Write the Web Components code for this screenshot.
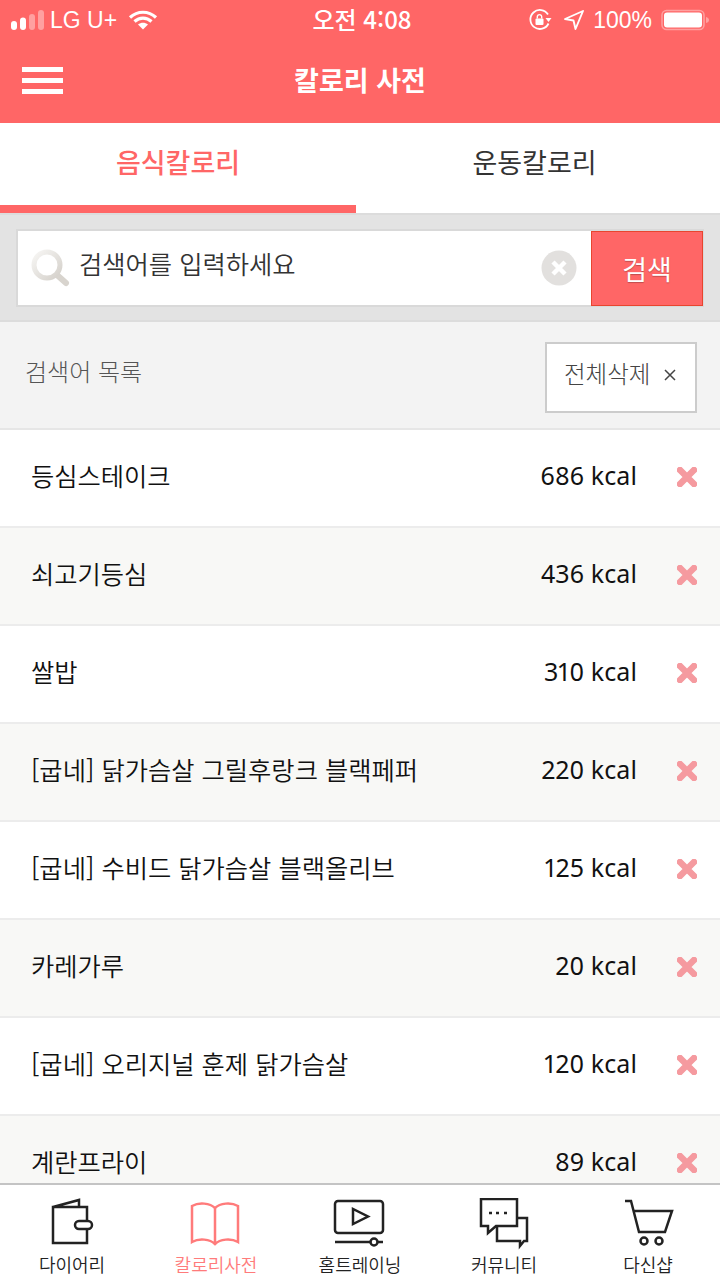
<!DOCTYPE html>
<html lang="ko">
<head>
<meta charset="utf-8">
<title>칼로리 사전</title>
<style>
html,body{margin:0;padding:0;height:1280px;overflow:hidden;background:#fff;}
body{font-family:"Noto Sans CJK KR","Noto Sans",sans-serif;}
calorie-app{height:1280px;}
</style>
</head>
<body>
<calorie-app>
  <status-bar slot="top"></status-bar>
  <app-header slot="top" title="칼로리 사전"></app-header>
  <tab-switch slot="top"></tab-switch>
  <search-box slot="top"></search-box>
  <list-head slot="top"></list-head>
  <food-row name="등심스테이크" kcal="686 kcal"></food-row>
  <food-row name="쇠고기등심" kcal="436 kcal" alt></food-row>
  <food-row name="쌀밥" kcal="310 kcal"></food-row>
  <food-row name="[굽네] 닭가슴살 그릴후랑크 블랙페퍼" kcal="220 kcal" alt></food-row>
  <food-row name="[굽네] 수비드 닭가슴살 블랙올리브" kcal="125 kcal"></food-row>
  <food-row name="카레가루" kcal="20 kcal" alt></food-row>
  <food-row name="[굽네] 오리지널 훈제 닭가슴살" kcal="120 kcal"></food-row>
  <food-row name="계란프라이" kcal="89 kcal" alt></food-row>
  <nav-bar slot="bottom">
    <nav-item icon="diary">다이어리</nav-item>
    <nav-item icon="book" on>칼로리사전</nav-item>
    <nav-item icon="video">홈트레이닝</nav-item>
    <nav-item icon="talk">커뮤니티</nav-item>
    <nav-item icon="cart">다신샵</nav-item>
  </nav-bar>
</calorie-app>
<script>
const sans = `"Noto Sans CJK KR","Noto Sans",sans-serif`

class CalorieApp extends HTMLElement{
  constructor(){
    super();
    this.attachShadow({mode:"open"})
    this.shadowRoot.innerHTML = `
<style>
:host{display:flex;flex-direction:column;width:720px;overflow:hidden;}
.list{flex:1;min-height:0;overflow:hidden;}
</style>
<slot name="top"></slot>
<div class="list"><slot></slot></div>
<slot name="bottom"></slot>`
  }
}

class StatusBar extends HTMLElement{
  constructor(){
    super();
    this.attachShadow({mode:"open"})
    this.shadowRoot.innerHTML = `
<style>
:host{display:grid;grid-template-columns:1fr auto 1fr;align-items:center;height:40px;background:#ff6666;color:#fff;
  font-family:"Liberation Sans",sans-serif;font-size:23px;box-sizing:border-box;}
.l,.r{display:flex;align-items:center;}
.l{padding-left:11px;gap:6px;}
.r{justify-content:flex-end;padding-right:10px;}
.time{font-family:${sans};font-size:24px;font-weight:500;margin:-4px -4px 0 0;}
svg{display:block;}
</style>
<div class="l">
  <svg width="33" height="20" viewBox="0 0 33 20"><rect x="0" y="11" width="6" height="9" rx="3" fill="#fff"/><rect x="9" y="7.500" width="6" height="12.500" rx="3" fill="#fff"/><rect x="18" y="4" width="6" height="16" rx="3" fill="#ffa0a0"/><rect x="27" y="0" width="6" height="20" rx="3" fill="#ffa0a0"/></svg>
  <span>LG U+</span>
  <svg style="margin-left:5px" width="30" height="20" viewBox="0 0 30 20"><path d="M2 7.500C9.500 .5 20.500 .5 28 7.500M6.500 11.500C11.500 7 18.500 7 23.500 11.500" fill="none" stroke="#fff" stroke-width="3.200"/><path d="M10 14.500C13 12 17 12 20 14.500L15 19.500Z" fill="#fff"/></svg>
</div>
<div class="time">오전 4:08</div>
<div class="r">
  <svg width="24" height="24" viewBox="0 0 24 24"><path d="M20.500 15.500A9.500 9.500 0 1 1 20 6.500" fill="none" stroke="#fff" stroke-width="1.800"/><path d="M17.500 10h6l-3 4z" fill="#fff"/><rect x="7.500" y="10.500" width="8" height="6.500" rx="1" fill="#fff"/><path d="M9.300 10.500V8.800a2.200 2.200 0 0 1 4.400 0v1.700" fill="none" stroke="#fff" stroke-width="1.400"/></svg>
  <svg style="margin-left:11px" width="22" height="22" viewBox="0 0 22 22"><path d="M20 2L2 10l8.500 1.500L12.500 20z" fill="none" stroke="#fff" stroke-width="1.900" stroke-linejoin="round"/></svg>
  <span style="margin-left:8px">100%</span>
  <svg style="margin-left:9px" width="49" height="22" viewBox="0 0 49 22"><rect x="1" y="1.500" width="42" height="19" rx="4.500" fill="none" stroke="#ffa0a0" stroke-width="1.500"/><rect x="3" y="3.500" width="38" height="15" rx="3" fill="#fff"/><path d="M45 8c2 .5 3 1.500 3 3s-1 2.500-3 3z" fill="#ffa0a0"/></svg>
</div>`
  }
}

class AppHeader extends HTMLElement{
  constructor(){
    super();
    this.attachShadow({mode:"open"})
    this.shadowRoot.innerHTML = `
<style>
:host{display:flex;align-items:center;height:83px;background:#ff6666;color:#fff;position:relative;justify-content:center;}
.t{font-family:${sans};font-size:27px;font-weight:700;margin-top:-4px;}
.m{position:absolute;left:22px;top:27px;width:41px;height:27px;display:flex;flex-direction:column;justify-content:space-between;}
.m i{display:block;height:5px;background:#fff;}
</style>
<div class="m"><i></i><i></i><i></i></div>
<div class="t"></div>`
    this.shadowRoot.querySelector(".t").textContent = this.getAttribute("title")
  }
}

class TabSwitch extends HTMLElement{
  constructor(){
    super();
    this.attachShadow({mode:"open"})
    this.shadowRoot.innerHTML = `
<style>
:host{display:flex;height:90px;background:#fff;font-family:${sans};font-size:27px;}
div{flex:1;box-sizing:border-box;display:flex;align-items:center;justify-content:center;padding:0 7px 6px 0;color:#333;border-bottom:8px solid transparent;}
.on{flex:0 0 356px;padding-right:0;color:#ff6666;font-weight:500;border-bottom-color:#ff6666;}
</style>
<div class="on">음식칼로리</div><div>운동칼로리</div>`
  }
}

class SearchBox extends HTMLElement{
  constructor(){
    super();
    this.attachShadow({mode:"open"})
    this.shadowRoot.innerHTML = `
<style>
:host{display:block;box-sizing:border-box;height:109px;padding:14px 16px;background:#e3e3e3;border-top:2px solid #dcdcdc;border-bottom:2px solid #dcdcdc;font-family:${sans};}
.box{display:flex;align-items:center;height:78px;box-sizing:border-box;background:#fff;border:2px solid #d9d9d9;}
.ph{flex:1;font-size:25.300px;color:#333;margin-left:8px;margin-top:-10px;font-weight:350;}
.clear{margin-right:14px;}
.btn{width:112px;height:75px;margin-right:-1px;box-sizing:border-box;background:#ff6666;border:1.500px solid #e8452f;color:#fff;font-size:27px;display:flex;align-items:center;justify-content:center;text-shadow:0 1px 1px rgba(0,0,0,.25);}
svg{display:block;}
</style>
<div class="box">
  <svg style="margin-left:13px" width="40" height="40" viewBox="0 0 40 40"><defs><linearGradient id="g" x1="0" y1="0" x2="1" y2="1"><stop offset="0" stop-color="#f7f6f4"/><stop offset="1" stop-color="#d4d0ca"/></linearGradient></defs><path d="M26 27L35 35" stroke="#d8d4ce" stroke-width="6" stroke-linecap="round"/><circle cx="16" cy="17" r="13" fill="#fff" stroke="url(#g)" stroke-width="5"/></svg>
  <div class="ph">검색어를 입력하세요</div>
  <svg class="clear" width="36" height="36" viewBox="0 0 36 36"><circle cx="18" cy="18" r="17.500" fill="#e2e0de"/><path d="M12 12L24 24M24 12L12 24" stroke="#fff" stroke-width="4.500"/></svg>
  <div class="btn">검색</div>
</div>`
  }
}

class ListHead extends HTMLElement{
  constructor(){
    super();
    this.attachShadow({mode:"open"})
    this.shadowRoot.innerHTML = `
<style>
:host{display:flex;align-items:center;justify-content:space-between;box-sizing:border-box;height:108px;padding:5px 23px 0 25px;background:#f3f3f3;border-bottom:2px solid #e6e6e6;font-family:${sans};color:#555;font-size:24px;font-weight:300;}
.l{margin-top:-14px;}
.all{display:flex;align-items:center;box-sizing:border-box;width:152px;height:71px;padding-left:17px;background:#fff;border:2px solid #ccc;color:#444;font-size:23.500px;}
.all span{margin-top:-10px;}
.all svg{margin:-5px 0 0 14px;}
</style>
<div class="l">검색어 목록</div>
<div class="all"><span>전체삭제</span><svg width="12" height="12" viewBox="0 0 12 12"><path d="M1 1L11 11M11 1L1 11" stroke="#444" stroke-width="1.500"/></svg></div>`
  }
}

class FoodRow extends HTMLElement{
  constructor(){
    super();
    this.attachShadow({mode:"open"})
    this.shadowRoot.innerHTML = `
<style>
:host{display:flex;align-items:center;box-sizing:border-box;height:98px;padding:0 23px 2px 31px;background:#fff;border-bottom:2px solid #ececec;font-family:${sans};font-size:25.300px;color:#111;font-weight:350;}
:host([alt]){background:#f8f8f6;}
.n{flex:1;margin-top:-4px;}
.k{font-family:"Noto Sans",sans-serif;font-variant-numeric:proportional-nums;font-size:25px;margin-right:40px;margin-top:-4px;font-weight:400;letter-spacing:.1px;}
svg{display:block;}
</style>
<div class="n"></div><div class="k"></div>
<svg width="20" height="20" viewBox="0 0 20 20"><path d="M3 3L17 17M17 3L3 17" stroke="#f59a9f" stroke-width="6.500" stroke-linecap="round"/></svg>`
    this.shadowRoot.querySelector(".n").textContent = this.getAttribute("name")
    this.shadowRoot.querySelector(".k").textContent = this.getAttribute("kcal")
  }
}

class NavBar extends HTMLElement{
  constructor(){
    super();
    this.attachShadow({mode:"open"})
    this.shadowRoot.innerHTML = `
<style>
:host{display:flex;box-sizing:border-box;height:97px;background:#fff;border-top:2px solid #c4c4c4;}
</style>
<slot></slot>`
  }
}

const navIcons = {
  diary:`<path d="M8 9V45H42V9ZM8 9L34 2V9"/><rect x="30" y="23" width="17" height="8" rx="4" fill="#fff"/>`,
  book:`<path d="M26 10C21 5 10 4 3 8V44C10 40 21 41 26 46C31 41 42 40 49 44V8C42 4 31 5 26 10ZM26 10V46"/>`,
  video:`<rect x="2" y="3" width="48" height="32" rx="3"/><path d="M20 11V26L35 18.500ZM2 44H50"/><circle cx="41" cy="44" r="3.500" fill="#fff"/>`,
  talk:`<path d="M4 1H40V28H19L11 35V28H4Z"/><path d="M40 20H50V43H47L43 48V43H20V28"/><path d="M12 15h3M19 15h3M27 15h3" stroke-width="2.600"/>`,
  cart:`<path d="M4 3H10L18 34H44L51 13H12.500"/><circle cx="23" cy="43" r="3.500"/><circle cx="38" cy="43" r="3.500"/>`
}

class NavItem extends HTMLElement{
  constructor(){
    super();
    this.attachShadow({mode:"open"})
    this.shadowRoot.innerHTML = `
<style>
:host{flex:1;display:flex;flex-direction:column;align-items:center;padding-top:13px;color:#222;font-family:${sans};font-size:18px;font-weight:350;}
:host([on]){color:#ff7b7b;}
svg{display:block;height:52px;width:54px;fill:none;stroke:currentColor;stroke-width:2.500;}
.lb{margin-top:2px;line-height:24px;}
</style>
<svg viewBox="0 0 54 52"></svg><div class="lb"><slot></slot></div>`
  }
  connectedCallback(){
    this.shadowRoot.querySelector("svg").innerHTML = navIcons[this.getAttribute("icon")]
  }
}

customElements.define("calorie-app",CalorieApp)
customElements.define("status-bar",StatusBar)
customElements.define("app-header",AppHeader)
customElements.define("tab-switch",TabSwitch)
customElements.define("search-box",SearchBox)
customElements.define("list-head",ListHead)
customElements.define("food-row",FoodRow)
customElements.define("nav-item",NavItem)
customElements.define("nav-bar",NavBar)
</script>
</body>
</html>
